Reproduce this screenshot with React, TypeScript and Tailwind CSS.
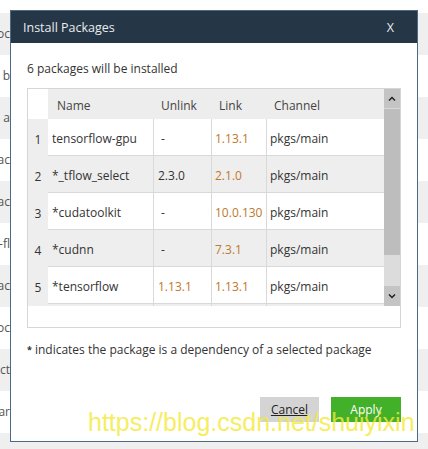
import React from 'react';

const bgRows = ['oc', 'l b', 's a', 'ac', 'ac', '-fl', 'ac', 'oc', 'ct', 'ar', ''];

const packages = [
  { name: 'tensorflow-gpu', unlink: '-', unlinkOrange: false, link: '1.13.1', channel: 'pkgs/main' },
  { name: '*_tflow_select', unlink: '2.3.0', unlinkOrange: false, link: '2.1.0', channel: 'pkgs/main' },
  { name: '*cudatoolkit', unlink: '-', unlinkOrange: false, link: '10.0.130', channel: 'pkgs/main' },
  { name: '*cudnn', unlink: '-', unlinkOrange: false, link: '7.3.1', channel: 'pkgs/main' },
  { name: '*tensorflow', unlink: '1.13.1', unlinkOrange: true, link: '1.13.1', channel: 'pkgs/main' },
];

const font = { fontFamily: '"Open Sans", "Noto Sans", sans-serif' };

const App = () => {
  return (
    <div className="relative w-[428px] h-[449px] overflow-hidden bg-white text-[#333]" style={font}>
      {/* page behind the dialog */}
      <div className="flex flex-col pt-[13px]">
        {bgRows.map((t, i) => (
          <div key={i} className={`h-[42px] flex items-center ${i % 2 === 0 ? 'bg-[#efefef]' : 'bg-white'}`}>
            <div className="w-[10px] overflow-hidden flex justify-end whitespace-nowrap text-[12px] text-[#555]">
              {t}
            </div>
          </div>
        ))}
      </div>

      {/* dialog */}
      <div className="absolute left-[10px] top-[10px] w-[408px] h-[432px] border border-[#4d6a82] bg-white flex flex-col">
        <div className="h-[32px] bg-[#253646] flex items-center justify-between pl-[12px] pr-[23px] pt-[3px] text-[#e8ecef] text-[12.5px]">
          <span>Install Packages</span>
          <span>X</span>
        </div>

        <div className="flex flex-col px-4">
          <div className="mt-[18px] h-[16px] flex items-center text-[12px]">6 packages will be installed</div>

          {/* table */}
          <div className="mt-[11px] h-[240px] border border-[#d6d6d6] flex">
            <div className="w-[356px] flex flex-col">
              <div className="h-[30px] flex text-[12px] text-[#444]">
                <div className="w-[20px] bg-white" />
                <div className="flex-1 flex items-center pt-[3px] bg-[#ededed]">
                  <div className="w-[105px] pl-[9px]">Name</div>
                  <div className="w-[58px] pl-[8px]">Unlink</div>
                  <div className="w-[55px] pl-[8px]">Link</div>
                  <div className="flex-1 pl-[8px]">Channel</div>
                </div>
              </div>
              <div className="h-[187px] overflow-hidden flex flex-col">
                {packages.map((p, i) => (
                  <div key={i} className="h-[37px] shrink-0 flex text-[12px]">
                    <div className="w-[20px] bg-[#eeeeee] flex items-center justify-center pt-[4px]">{i + 1}</div>
                    <div
                      className={`flex-1 flex border-b border-[#d9d9d9] ${i % 2 === 1 ? 'bg-[#eeeeee]' : 'bg-white'}`}
                    >
                      <div className="w-[105px] pl-[4px] pt-[3px] flex items-center">{p.name}</div>
                      <div
                        className={`w-[58px] border-l border-[#d9d9d9] pl-[4px] pt-[3px] flex items-center ${
                          p.unlinkOrange ? 'text-[#c0782a]' : ''
                        }`}
                      >
                        {p.unlink === '-' ? <span className="pl-[3px]">-</span> : p.unlink}
                      </div>
                      <div className="w-[55px] border-l border-[#d9d9d9] pl-[3px] pt-[3px] flex items-center text-[#c0782a]">
                        {p.link}
                      </div>
                      <div className="flex-1 border-l border-[#d9d9d9] pl-[3px] pt-[3px] flex items-center">
                        {p.channel}
                      </div>
                    </div>
                  </div>
                ))}
                <div className="h-[4px] shrink-0 flex">
                  <div className="w-[20px] bg-[#eeeeee]" />
                  <div className="flex-1 flex bg-[#eeeeee]">
                    <div className="w-[105px]" />
                    <div className="w-[58px] border-l border-[#d9d9d9]" />
                    <div className="w-[55px] border-l border-[#d9d9d9]" />
                    <div className="flex-1 border-l border-[#d9d9d9]" />
                  </div>
                </div>
              </div>
            </div>

            {/* scrollbar */}
            <div className="w-[16px] h-[217px] flex flex-col">
              <div className="h-[20px] bg-[#c4c4c4] flex items-center justify-center border-b border-[#d8d8d8]">
                <svg width="8" height="5" viewBox="0 0 8 5">
                  <path d="M1 4.5 L4 1.5 L7 4.5" fill="none" stroke="#222" strokeWidth="1.5" />
                </svg>
              </div>
              <div className="h-[146px] bg-[#bdbdbd]" />
              <div className="h-[31px] bg-[#dcdcdc]" />
              <div className="h-[20px] bg-[#c4c4c4] flex items-center justify-center">
                <svg width="8" height="5" viewBox="0 0 8 5">
                  <path d="M1 0.5 L4 3.5 L7 0.5" fill="none" stroke="#222" strokeWidth="1.5" />
                </svg>
              </div>
            </div>
          </div>

          <div className="mt-[14px] h-[16px] flex items-center text-[12px]">
            <span className="font-bold text-[9px] mr-[3px]">*</span>
            indicates the package is a dependency of a selected package
          </div>

          <div className="mt-[39px] flex justify-end gap-[12px]">
            <button className="w-[59px] h-[25px] bg-[#d4d4d4] text-[12px] text-[#222] underline">Cancel</button>
            <button className="w-[70px] h-[25px] bg-[#43b02a] text-[12px] text-white">Apply</button>
          </div>
        </div>
      </div>

      {/* watermark */}
      <div
        className="absolute left-[88px] top-[407px] text-[25px] leading-[30px] text-[#f3ea3a] opacity-80 whitespace-nowrap pointer-events-none"
        style={{ fontFamily: '"Liberation Sans", Arial, sans-serif' }}
      >
        https://blog.csdn.net/shuiyixin
      </div>
    </div>
  );
};

export default App;
